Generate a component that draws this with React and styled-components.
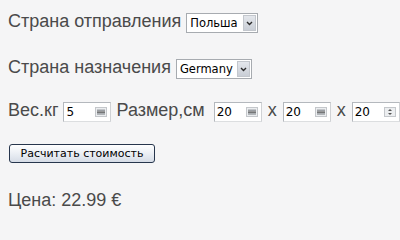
import React from "react";
import styled, { createGlobalStyle } from "styled-components";

const GlobalStyle = createGlobalStyle`
  html, body {
    margin: 0;
    padding: 0;
    background: #f5f5f6;
  }
  body {
    font-family: "Liberation Sans", Arial, sans-serif;
    color: #4a4a4a;
  }
`;

const Form = styled.div`
  display: flex;
  flex-direction: column;
  align-items: flex-start;
  padding: 12px 8px 0 8px;
`;

const Row = styled.div`
  display: flex;
  align-items: baseline;
  margin-top: ${(p) => p.top || 0}px;
`;

const Label = styled.span`
  font-size: 18px;
  line-height: 18px;
  margin-right: ${(p) => (p.gap !== undefined ? p.gap : 5)}px;
  white-space: nowrap;
`;

const SelectBox = styled.div`
  display: inline-flex;
  align-items: center;
  box-sizing: border-box;
  width: ${(p) => p.w}px;
  height: 20px;
  background: #fff;
  border: 1px solid #a7abb0;
  padding-left: 3px;
  font-family: "DejaVu Sans", Verdana, sans-serif;
  font-size: 11.5px;
  color: #000;
`;

const SelectText = styled.span`
  flex: 1;
`;

const Arrow = styled.span`
  display: flex;
  align-items: center;
  justify-content: center;
  width: 13px;
  height: 16px;
  margin-right: 1px;
  background: linear-gradient(#e4e7ec, #c9ced6);
  border: 1px solid #c3c7cd;
  box-sizing: border-box;
`;

const NumBox = styled.div`
  display: inline-flex;
  align-items: center;
  box-sizing: border-box;
  width: 48px;
  height: 20px;
  background: #fff;
  border: 1px solid #b4b8bd;
  border-bottom-color: #dcdee0;
  border-right-color: #d0d2d5;
  padding: 0 3px 0 2px;
  margin-right: ${(p) => p.gap || 0}px;
  font-family: "DejaVu Sans", Verdana, sans-serif;
  font-size: 12px;
  color: #000;
`;

const NumText = styled.span`
  flex: 1;
`;

const Times = styled.span`
  font-size: 18px;
  line-height: 18px;
  margin-right: 6px;
`;

const Button = styled.button`
  box-sizing: border-box;
  width: 146px;
  height: 19px;
  margin-left: 1px;
  padding: 0;
  border: 1px solid #27364d;
  border-radius: 3px;
  background: linear-gradient(#ffffff, #e9edf3 55%, #d6dce6);
  font-family: "DejaVu Sans", Verdana, sans-serif;
  font-size: 11px;
  color: #000;
`;

const Price = styled.div`
  font-size: 18px;
  line-height: 18px;
`;

const Chevron = () => (
  <svg width="7" height="5" viewBox="0 0 7 5">
    <path d="M1 1 L3.5 3.5 L6 1" fill="none" stroke="#2b2b2b" strokeWidth="1.4" />
  </svg>
);

const Spin = ({ arrows }) => (
  <svg width="12" height="10" viewBox="0 0 12 10">
    <rect x="0.5" y="0.5" width="11" height="9" fill="#eceef0" stroke="#c4c7cb" />
    {arrows ? (
      <>
        <path d="M4 4 L6 2 L8 4 Z" fill="#555" />
        <path d="M4 6 L6 8 L8 6 Z" fill="#555" />
      </>
    ) : (
      <>
        <rect x="2" y="2.5" width="8" height="1.5" fill="#9a9ea3" />
        <rect x="2" y="4.5" width="8" height="1.2" fill="#444" />
        <rect x="2" y="6.2" width="8" height="1.5" fill="#9a9ea3" />
      </>
    )}
  </svg>
);

const Select = ({ w, value }) => (
  <SelectBox w={w}>
    <SelectText>{value}</SelectText>
    <Arrow>
      <Chevron />
    </Arrow>
  </SelectBox>
);

const Num = ({ value, gap, arrows }) => (
  <NumBox gap={gap}>
    <NumText>{value}</NumText>
    <Spin arrows={arrows} />
  </NumBox>
);

export default function App() {
  return (
    <>
      <GlobalStyle />
      <Form>
        <Row>
          <Label>Страна отправления</Label>
          <Select w={72} value="Польша" />
        </Row>
        <Row top={25}>
          <Label>Страна назначения</Label>
          <Select w={76} value="Germany" />
        </Row>
        <Row top={22}>
          <Label>Вес.кг</Label>
          <Num value="5" gap={5} />
          <Label gap={9}>Размер,см</Label>
          <Num value="20" gap={6} />
          <Times>x</Times>
          <Num value="20" gap={6} />
          <Times>x</Times>
          <Num value="20" arrows />
        </Row>
        <Row top={22}>
          <Button>Расчитать стоимость</Button>
        </Row>
        <Row top={28}>
          <Price>Цена: 22.99 €</Price>
        </Row>
      </Form>
    </>
  );
}
